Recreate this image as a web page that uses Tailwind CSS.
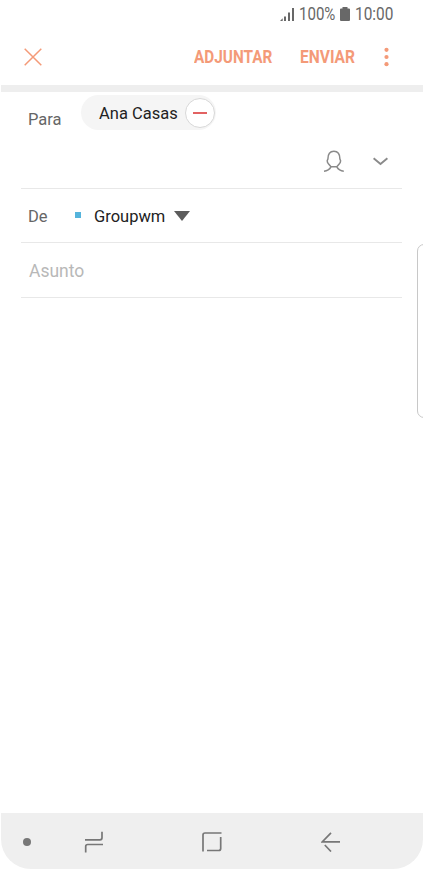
<!DOCTYPE html>
<html lang="es">
<head>
    <meta charset="UTF-8">
    <meta name="viewport" content="width=device-width, initial-scale=1.0">
    <title>Nuevo correo</title>
    <script src="https://cdn.jsdelivr.net/npm/@tailwindcss/browser@4"></script>
</head>
<body class="bg-white font-['Roboto',sans-serif] overflow-hidden">
    <div class="relative w-[423px] h-[870px] flex flex-col overflow-hidden whitespace-nowrap">
        <!-- Status bar -->
        <div class="h-[29px] flex items-center pl-[280px] text-[17.5px] leading-[29px] text-[#686868]">
            <svg class="w-[15px] h-[15px] mb-px shrink-0" viewBox="0 0 15 15" fill="currentColor">
                <path d="M0 14L2.700 11.300V14zM4 9.500h2v4.500H4zM8 5.500h2V14H8zM12 1h2v13h-2z"/>
            </svg>
            <span class="ml-1 w-[41px] origin-left scale-x-[.86]">100%</span>
            <svg class="w-[10px] h-[14px] mb-[2px] shrink-0" viewBox="0 0 10 14" fill="currentColor">
                <path d="M2.500 0h5v1.400H9q1 0 1 1V13q0 1-1 1H1q-1 0-1-1V2.400q0-1 1-1h1.500z"/>
            </svg>
            <span class="ml-[5px] w-[40px] origin-left scale-x-[.88]">10:00</span>
        </div>

        <!-- Header -->
        <header class="h-[56px] flex items-center pl-6 text-[#f49a78]">
            <svg class="w-[18px] h-[18px] shrink-0" viewBox="0 0 18 18" fill="none" stroke="currentColor" stroke-width="1.500">
                <path d="M.7.7l16.600 16.600M17.300.7L.7 17.300"/>
            </svg>
            <span class="ml-[152px] w-[106px] text-[17.5px] font-bold origin-left scale-x-[.875]">ADJUNTAR</span>
            <span class="w-[84px] text-[17.5px] font-bold origin-left scale-x-[.89]">ENVIAR</span>
            <svg class="w-[5px] h-[20px] mb-px shrink-0" viewBox="0 0 5 20" fill="currentColor">
                <circle cx="2.500" cy="2.800" r="2.100"/>
                <circle cx="2.500" cy="10" r="2.100"/>
                <circle cx="2.500" cy="17.200" r="2.100"/>
            </svg>
        </header>
        <div class="h-[7px] ml-px bg-[#eeeeee]"></div>

        <!-- Recipients -->
        <section class="h-[97px] ml-[21px] mr-[21px] border-b border-[#e8e8e8] pt-[3px]">
            <div class="flex h-[36px] pl-[7px]">
                <span class="w-[53px] pt-[11px] text-[16.5px] leading-[28px] text-[#666]">Para</span>
                <div class="w-[135px] h-[35px] rounded-full bg-[#f5f5f5] flex items-center pl-[18px]">
                    <span class="w-[86px] pt-[3px] text-[16.5px] text-[#222]">Ana Casas</span>
                    <span class="w-[30px] h-[30px] shrink-0 rounded-full border border-[#d8d8d8] bg-white flex items-center justify-center">
                        <span class="w-[14px] h-[2px] bg-[#e26262]"></span>
                    </span>
                </div>
            </div>
            <div class="flex items-center h-[56px] pl-[302px] pt-[4px] text-[#8a8a8a]">
                <svg class="w-[22px] h-[23px] shrink-0" viewBox="0 0 22 23" fill="none" stroke="currentColor" stroke-width="1.500" stroke-linejoin="round">
                    <path d="M8 16.800L5.600 14Q4.200 12.500 4.200 10.800L4.900 9C4.900 4.200 7.200 1.200 10.900 1.200S16.900 4.200 16.900 9L17.600 10.800Q17.600 12.500 16.200 14L13.800 16.800ZM8 16.800Q5.800 20.800 1 21.200M13.800 16.800Q16 20.800 20.800 21.200"/>
                </svg>
                <svg class="ml-[28px] w-[15px] h-[9px] shrink-0" viewBox="0 0 15 9" fill="none" stroke="currentColor" stroke-width="1.900">
                    <path d="M.6 1.200l6.900 5.800 6.900-5.800"/>
                </svg>
            </div>
        </section>

        <!-- Sender -->
        <section class="h-[54px] mx-[21px] border-b border-[#e8e8e8] flex items-center pl-[7px] text-[16.5px]">
            <span class="w-[47px] pt-[3px] text-[#666]">De</span>
            <span class="size-[6px] mb-[2px] bg-[#55b4dc]"></span>
            <span class="ml-[13px] w-[80px] pt-[3px] text-[#222]">Groupwm</span>
            <svg class="w-[16px] h-[10px] mt-px shrink-0" viewBox="0 0 16 10" fill="#5c5c5c">
                <path d="M0 0h16L8 10z"/>
            </svg>
        </section>

        <!-- Subject -->
        <section class="h-[55px] mx-[21px] border-b border-[#e8e8e8] flex items-center pl-[8px] pt-[3px] text-[17.5px] text-[#b8b8b8]">Asunto</section>

        <!-- Message body -->
        <main class="flex-1"></main>

        <!-- Navigation bar -->
        <nav class="h-[56px] mb-px ml-px rounded-b-[30px] bg-[#efefef] flex items-center pl-[22px] pt-[2px] text-[#777]">
            <span class="size-[8px] rounded-full bg-[#777]"></span>
            <svg class="ml-[53px] w-[20px] h-[22px] shrink-0" viewBox="0 0 20 22" fill="none" stroke="currentColor" stroke-width="1.700">
                <path d="M1 8.800h15q2 0 2-2V.8M1.700 21.500V15.500q0-2 2-2H19"/>
            </svg>
            <svg class="ml-[98px] w-[20px] h-[20px] shrink-0" viewBox="0 0 20 20" fill="none" stroke="currentColor" stroke-width="1.700">
                <path d="M1 19.500V3q0-2 2-2h16.500M18.700 5v11.500q0 2-2 2H5"/>
            </svg>
            <svg class="ml-[99px] w-[20px] h-[20px] shrink-0" viewBox="0 0 20 20" fill="none" stroke="currentColor" stroke-width="1.700">
                <path d="M10 .8L1.200 9.900H19M3.800 13l6.200 6.500"/>
            </svg>
        </nav>

        <!-- Edge panel handle -->
        <div class="absolute left-[417px] top-[244px] w-[14px] h-[174px] rounded-l-[7px] border border-[#c8c8c8] bg-white"></div>
    </div>
</body>
</html>
